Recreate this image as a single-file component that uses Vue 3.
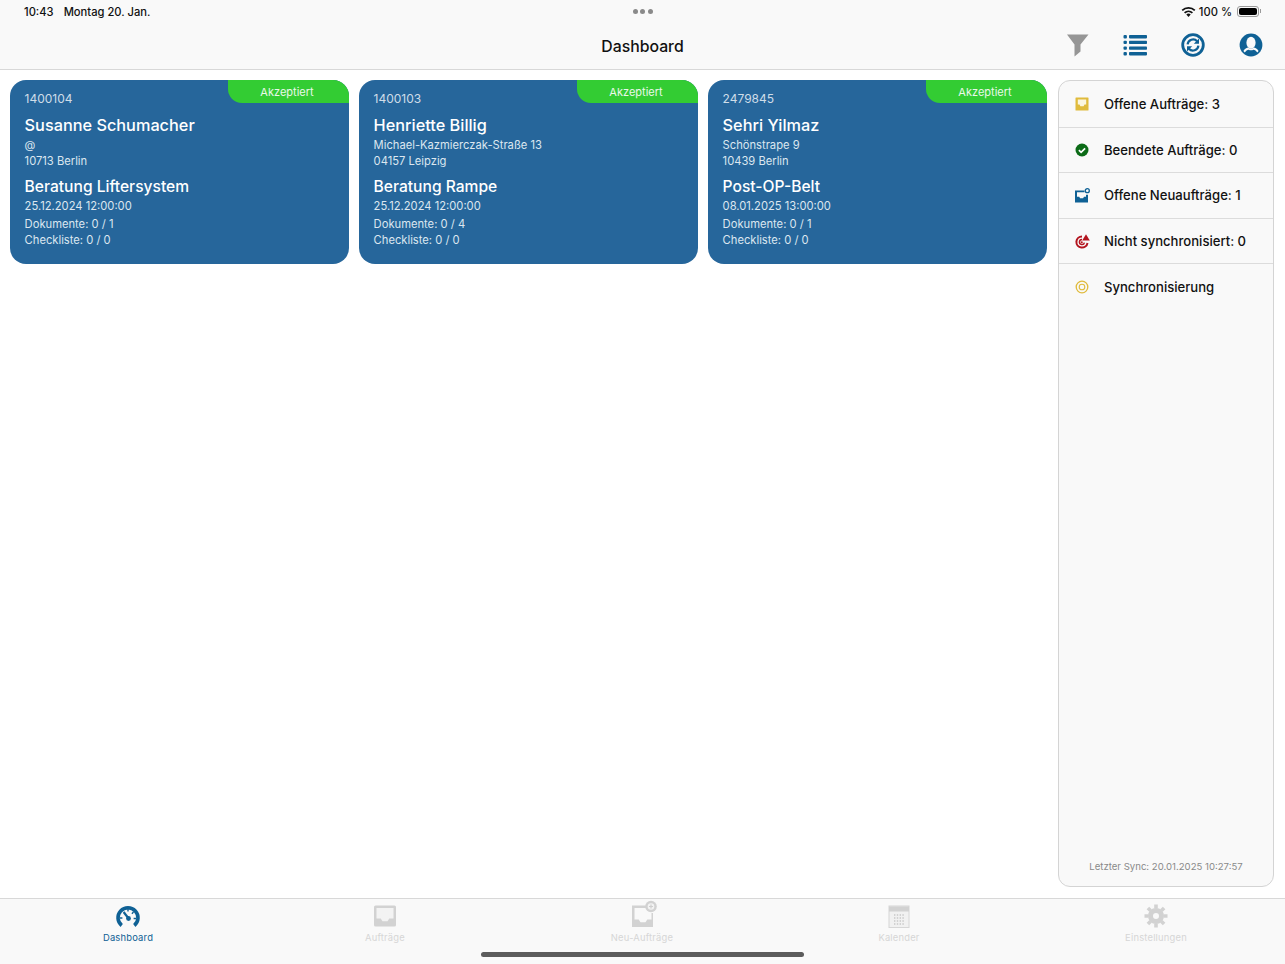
<template>
  <div class="app">
    <header class="topbar">
      <div class="status">
        <div class="status-left"><span>10:43</span><span>Montag 20. Jan.</span></div>
        <div class="dots"><i></i><i></i><i></i></div>
        <div class="status-right">
          <svg width="15" height="11" viewBox="0 0 15 11">
            <path d="M0.6 3.8a10 10 0 0 1 13.8 0l-1.2 1.3a8.2 8.2 0 0 0-11.4 0z" fill="#111" />
            <path d="M3 6.3a6.6 6.6 0 0 1 9 0l-1.2 1.3a4.9 4.9 0 0 0-6.6 0z" fill="#111" />
            <path d="M5.3 8.6a3.2 3.2 0 0 1 4.4 0L7.5 11z" fill="#111" />
          </svg>
          <span>100 %</span>
          <div class="battery"><b></b></div>
        </div>
      </div>
      <div class="navrow">
        <h1>Dashboard</h1>
        <div class="nav-icons">
          <svg width="24" height="24" viewBox="0 0 24 24">
            <path d="M2 1.500h21.500L15.500 11.500v7L9.500 23.500V11.500z" fill="#969696" />
          </svg>
          <svg width="24" height="24" viewBox="0 0 24 24" fill="#0f6195">
            <rect x="0.500" y="2" width="3.400" height="3.400" rx="1" />
            <rect x="6" y="2" width="18" height="3.400" rx="0.800" />
            <rect x="0.500" y="7.700" width="3.400" height="3.400" rx="1" />
            <rect x="6" y="7.700" width="18" height="3.400" rx="0.800" />
            <rect x="0.500" y="13.400" width="3.400" height="3.400" rx="1" />
            <rect x="6" y="13.400" width="18" height="3.400" rx="0.800" />
            <rect x="0.500" y="19" width="3.400" height="3.400" rx="1" />
            <rect x="6" y="19" width="18" height="3.400" rx="0.800" />
          </svg>
          <svg width="24" height="24" viewBox="0 0 24 24">
            <circle cx="12" cy="12" r="10.300" fill="none" stroke="#0f6195" stroke-width="2.800" />
            <path d="M6.600 11.400a5.500 5.500 0 0 1 9.500-3.200" fill="none" stroke="#0f6195" stroke-width="2.200" />
            <path d="M18 5.600v5.200H12.800z" fill="#0f6195" />
            <path d="M17.400 12.600a5.500 5.500 0 0 1-9.500 3.200" fill="none" stroke="#0f6195" stroke-width="2.200" />
            <path d="M6 18.400v-5.200H11.200z" fill="#0f6195" />
          </svg>
          <svg width="24" height="24" viewBox="0 0 24 24">
            <circle cx="12" cy="12" r="11.400" fill="#0f6195" />
            <ellipse cx="12" cy="9.800" rx="4.600" ry="6" fill="#fafafa" />
            <path d="M4.400 18c1.200-2.400 3.400-3.100 4.900-3.400.9 1.300 4.500 1.300 5.400 0 1.500.3 3.700 1 4.900 3.400l-1.300 1.500c-1-1.800-2.500-2.600-3.900-2.800-1.300.8-3.400.8-4.700 0-1.400.2-2.900 1-3.900 2.800z" fill="#fafafa" />
          </svg>
        </div>
      </div>
    </header>

    <main class="body">
      <section class="cards">
        <article class="card" v-for="order in orders" :key="order.id">
          <div class="badge">Akzeptiert</div>
          <div class="order-id">{{ order.id }}</div>
          <div class="name">{{ order.name }}</div>
          <div class="line">{{ order.street }}</div>
          <div class="line">{{ order.city }}</div>
          <div class="title">{{ order.title }}</div>
          <div class="line">{{ order.date }}</div>
          <div class="line docs">Dokumente: {{ order.docs }}</div>
          <div class="line">Checkliste: 0 / 0</div>
        </article>
      </section>

      <aside class="panel">
        <div class="panel-row">
          <svg width="14" height="14" viewBox="0 0 14 14">
            <rect x="0.500" y="0.500" width="13" height="13" rx="0.500" fill="#e0bb3c" />
            <path d="M2.800 2.600h8.400v5h-1.700l-.9 1.600H5.400l-.9-1.600H2.800z" fill="#fbf6df" />
          </svg>
          <span>Offene Aufträge: 3</span>
        </div>
        <div class="panel-row">
          <svg width="14" height="14" viewBox="0 0 14 14">
            <circle cx="7" cy="7" r="6.500" fill="#0c6b17" />
            <path d="M3.900 7.200l2.200 2.200 4-4" fill="none" stroke="#fff" stroke-width="1.700" />
          </svg>
          <span>Beendete Aufträge: 0</span>
        </div>
        <div class="panel-row">
          <svg width="16" height="15" viewBox="0 0 16 15">
            <path d="M1 2.500h9.500v1.800H3v4.500h2.200l.9 1.500h3l.9-1.500h2V6.800h2V14.500H1z" fill="#0f6195" />
            <circle cx="13.300" cy="2.700" r="2" fill="none" stroke="#0f6195" stroke-width="1.300" />
          </svg>
          <span>Offene Neuaufträge: 1</span>
        </div>
        <div class="panel-row">
          <svg width="16" height="15" viewBox="0 0 16 15">
            <path d="M8 2.400a5.600 5.600 0 1 0 5.500 6.600" fill="none" stroke="#b3151f" stroke-width="2" />
            <path d="M8 5.600a2.500 2.500 0 1 0 2.400 3" fill="none" stroke="#b3151f" stroke-width="1.500" />
            <circle cx="7.800" cy="8.200" r="1" fill="#b3151f" />
            <path d="M12 0.300l3.800 6.200H8.200z" fill="#b3151f" />
          </svg>
          <span>Nicht synchronisiert: 0</span>
        </div>
        <div class="panel-row">
          <svg width="14" height="14" viewBox="0 0 14 14" fill="none" stroke="#e0bb3c">
            <circle cx="7" cy="7" r="5.800" stroke-width="1.300" />
            <circle cx="7" cy="7" r="2.800" stroke-width="1.100" />
          </svg>
          <span>Synchronisierung</span>
        </div>
        <div class="last-sync">Letzter Sync: 20.01.2025 10:27:57</div>
      </aside>
    </main>

    <nav class="tabbar">
      <div class="tab active">
        <svg width="26" height="24" viewBox="0 0 26 24">
          <path d="M6.700 21.500a10 10 0 1 1 12.600 0" fill="none" stroke="#0f6195" stroke-width="3.600" />
          <path d="M13.600 14.500L8.600 8" stroke="#0f6195" stroke-width="2.200" />
          <circle cx="13.500" cy="14.500" r="2.400" fill="#0f6195" />
          <path d="M13 5v2.600M18.500 8l-1.600 1.800M21 14.500h-2.400M5 14h2.400" stroke="#0f6195" stroke-width="1.400" />
        </svg>
        <span>Dashboard</span>
      </div>
      <div class="tab">
        <svg width="26" height="24" viewBox="0 0 26 24">
          <rect x="2" y="1.500" width="22" height="21" rx="1.500" fill="#d2d2d2" />
          <path d="M4.500 4h17v10.600h-4.200l-1.800 2.600h-5l-1.800-2.600H4.500z" fill="#f3f3f3" />
        </svg>
        <span>Aufträge</span>
      </div>
      <div class="tab">
        <svg width="28" height="28" viewBox="0 0 28 28" class="tab-tall">
          <path d="M2 5.500h15v2.500H4.500v11.600h4.200l1.800 2.600h5l1.800-2.600h4.200V13H23v14H2z" fill="#d2d2d2" />
          <circle cx="21" cy="6.500" r="5.800" fill="#d2d2d2" />
          <circle cx="21" cy="6.500" r="3.300" fill="#f3f3f3" />
          <path d="M21 4.500v4M19 6.500h4" stroke="#cfcfcf" stroke-width="1.200" />
        </svg>
        <span>Neu-Aufträge</span>
      </div>
      <div class="tab">
        <svg width="26" height="24" viewBox="0 0 26 24">
          <rect x="3" y="2" width="20" height="21.500" fill="#f1f1f1" stroke="#d6d6d6" stroke-width="1" />
          <rect x="3" y="2.500" width="20" height="5" fill="#d2d2d2" />
          <path d="M8 11h10M8 14h10M8 17h10M8 20h10" stroke="#c8c8c8" stroke-width="1.400" stroke-dasharray="1.400 1.400" />
        </svg>
        <span>Kalender</span>
      </div>
      <div class="tab">
        <svg width="26" height="24" viewBox="0 0 26 24">
          <circle cx="13" cy="12" r="5.500" fill="none" stroke="#d2d2d2" stroke-width="5" />
          <path d="M13 0.500v4M13 19.500v4M4.900 3.900l2.800 2.800M18.300 17.300l2.800 2.800M1.500 12h4M20.500 12h4M4.900 20.100l2.800-2.800M18.300 6.700l2.800-2.800" stroke="#d2d2d2" stroke-width="3.600" />
        </svg>
        <span>Einstellungen</span>
      </div>
      <div class="home-bar"></div>
    </nav>
  </div>
</template>

<script setup>
const orders = [
  { id: '1400104', name: 'Susanne Schumacher', street: '@', city: '10713 Berlin', title: 'Beratung Liftersystem', date: '25.12.2024 12:00:00', docs: '0 / 1' },
  { id: '1400103', name: 'Henriette Billig', street: 'Michael-Kazmierczak-Straße 13', city: '04157 Leipzig', title: 'Beratung Rampe', date: '25.12.2024 12:00:00', docs: '0 / 4' },
  { id: '2479845', name: 'Sehri Yilmaz', street: 'Schönstrape 9', city: '10439 Berlin', title: 'Post-OP-Belt', date: '08.01.2025 13:00:00', docs: '0 / 1' },
]
</script>

<style scoped>
.app {
  width: 1285px;
  height: 964px;
  display: flex;
  flex-direction: column;
  background: #fff;
  color: #111;
  font-family: Inter, "Liberation Sans", sans-serif;
  overflow: hidden;
}

.topbar {
  height: 70px;
  box-sizing: border-box;
  background: #f9f9f9;
  border-bottom: 1px solid #d8d8d8;
  flex-shrink: 0;
}
.status {
  height: 23px;
  padding: 0 24px;
  display: grid;
  grid-template-columns: 1fr auto 1fr;
  align-items: center;
  font-size: 11.2px;
  font-weight: 500;
}
.status-left {
  display: flex;
  gap: 10px;
}
.dots {
  display: flex;
  gap: 2.500px;
}
.dots i {
  width: 5px;
  height: 5px;
  border-radius: 50%;
  background: #8a8a8a;
}
.status-right {
  display: flex;
  align-items: center;
  justify-content: flex-end;
  gap: 3px;
}
.battery {
  position: relative;
  width: 22px;
  height: 11px;
  margin-left: 2px;
  margin-right: 2px;
  padding: 1px;
  box-sizing: border-box;
  border: 1px solid #9a9a9a;
  border-radius: 3px;
  display: flex;
}
.battery::after {
  content: "";
  position: absolute;
  right: -3px;
  top: 2px;
  width: 1.500px;
  height: 4px;
  background: #9a9a9a;
}
.battery b {
  flex: 1;
  background: #000;
  border-radius: 2px;
}

.navrow {
  height: 46px;
  position: relative;
  display: flex;
  align-items: center;
  justify-content: center;
}
.navrow h1 {
  margin: 0;
  font-size: 15.800px;
  font-weight: 500;
}
.nav-icons {
  position: absolute;
  right: 22px;
  top: 10px;
  display: flex;
  gap: 34px;
}

.body {
  flex: 1;
  min-height: 0;
  display: flex;
  padding: 10px 11px 11px 10px;
  gap: 11px;
}
.cards {
  flex: 1;
  display: grid;
  grid-template-columns: repeat(3, 339px);
  gap: 10px;
  align-content: start;
}
.card {
  position: relative;
  height: 184px;
  box-sizing: border-box;
  padding: 11px 14.600px;
  background: #26669b;
  border-radius: 16px;
  color: #dce7f0;
  font-size: 11.200px;
  line-height: 16px;
}
.badge {
  position: absolute;
  top: 0;
  right: 0;
  width: 121px;
  height: 23px;
  padding-right: 3px;
  box-sizing: border-box;
  background: #33cc33;
  border-radius: 0 16px 0 14px;
  color: #eaf8ea;
  font-size: 11px;
  line-height: 24px;
  text-align: center;
}
.order-id {
  height: 16px;
  font-size: 12px;
  color: #cfdde9;
}
.name,
.title {
  color: #fff;
  font-weight: 500;
}
.name {
  margin-top: 6px;
  font-size: 16.300px;
  line-height: 24px;
}
.title {
  margin-top: 7px;
  font-size: 15.600px;
  line-height: 22px;
}
.docs {
  margin-top: 2px;
}
.line {
  white-space: nowrap;
}

.panel {
  width: 216px;
  box-sizing: border-box;
  padding-top: 1px;
  background: #f9f9f9;
  border: 1px solid #d4d4d4;
  border-radius: 12px;
  display: flex;
  flex-direction: column;
  font-size: 13.100px;
  font-weight: 500;
}
.panel-row {
  height: 45.600px;
  flex-shrink: 0;
  box-sizing: border-box;
  display: flex;
  align-items: center;
  padding-left: 15px;
  border-bottom: 1px solid #dcdcdc;
}
.panel-row svg {
  width: 16px;
  flex-shrink: 0;
  margin-right: 14px;
}
.panel-row:nth-child(5) {
  border-bottom: none;
}
.last-sync {
  margin-top: auto;
  padding-bottom: 14px;
  text-align: center;
  font-size: 9.600px;
  font-weight: 400;
  color: #8a8a8a;
}

.tabbar {
  height: 66px;
  flex-shrink: 0;
  box-sizing: border-box;
  position: relative;
  display: grid;
  grid-template-columns: repeat(5, 257px);
  background: #f9f9f9;
  border-top: 1px solid #d8d8d8;
}
.tab {
  display: flex;
  flex-direction: column;
  align-items: center;
  padding-top: 5px;
  padding-right: 1px;
  font-size: 9.400px;
  line-height: 12px;
  letter-spacing: 0.2px;
  color: #d6d6d6;
}
.tab span {
  margin-top: 4px;
}
.tab.active {
  color: #0f6195;
}
.tab-tall {
  margin-top: -4px;
  margin-left: 3px;
}
.home-bar {
  position: absolute;
  left: 481px;
  bottom: 7px;
  width: 323px;
  height: 5px;
  border-radius: 3px;
  background: #5c5c5c;
}
</style>

<style>
body {
  background: #fff;
}
</style>
